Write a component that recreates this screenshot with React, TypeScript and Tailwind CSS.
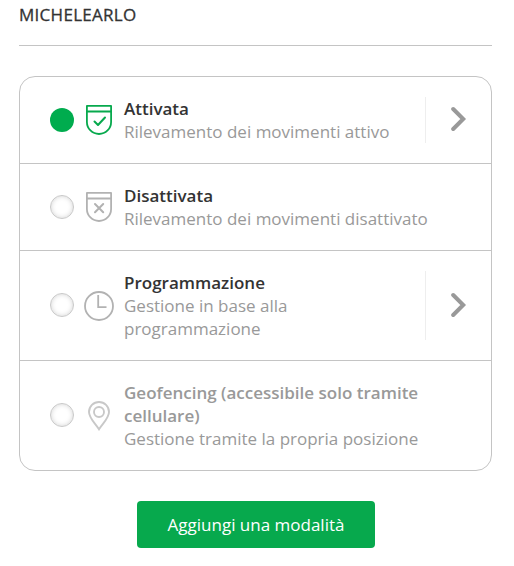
import React, { useState } from 'react';
import clsx from 'clsx';

interface IconProps {
  className?: string;
}

interface Mode {
  id: string;
  title: string;
  description: string;
  icon: React.FC<IconProps>;
  editable?: boolean;
  disabled?: boolean;
}

const ArmedIcon = ({ className }: IconProps) => (
  <svg className={className} xmlns="http://www.w3.org/2000/svg" width="30" height="30" fill="none" viewBox="0 0 30 30" stroke="currentColor" strokeWidth={1.8} strokeLinecap="round" strokeLinejoin="round">
    <path d="M2.9 .9h24.2v16a12.1 12.1 0 01-24.2 0zM3 6.5h24" />
    <path d="M10.5 16.5l3.5 3.5 7-7.5" strokeWidth={2} />
  </svg>
);

const DisarmedIcon = ({ className }: IconProps) => (
  <svg className={className} xmlns="http://www.w3.org/2000/svg" width="30" height="30" fill="none" viewBox="0 0 30 30" stroke="currentColor" strokeWidth={1.8} strokeLinecap="round" strokeLinejoin="round">
    <path d="M2.9 .9h24.2v16a12.1 12.1 0 01-24.2 0zM3 6.5h24" />
    <path d="M11 12l8.2 8.2M19.2 12L11 20.2" strokeWidth={2} />
  </svg>
);

const ScheduleIcon = ({ className }: IconProps) => (
  <svg className={className} xmlns="http://www.w3.org/2000/svg" width="30" height="30" fill="none" viewBox="0 0 30 30" stroke="currentColor" strokeWidth={1.8}>
    <circle cx="15" cy="15" r="14" />
    <path d="M14.2 4v12.2h8.3" />
  </svg>
);

const GeofencingIcon = ({ className }: IconProps) => (
  <svg className={className} xmlns="http://www.w3.org/2000/svg" width="30" height="30" fill="none" viewBox="0 0 30 30" stroke="currentColor" strokeWidth={1.9}>
    <path d="M15 28.3C11.5 22.5 5 17.2 5 11a10 10 0 0120 0c0 6.2-6.5 11.5-10 17.3z" />
    <circle cx="15" cy="11" r="5" />
  </svg>
);

const ChevronIcon = ({ className }: IconProps) => (
  <svg className={className} xmlns="http://www.w3.org/2000/svg" width="16" height="26" fill="none" viewBox="0 0 16 26" stroke="currentColor" strokeWidth={4} strokeLinecap="round">
    <path d="M2.2 3L12.2 13 2.2 23" />
  </svg>
);

const modes: Mode[] = [
  { id: 'armed', title: 'Attivata', description: 'Rilevamento dei movimenti attivo', icon: ArmedIcon, editable: true },
  { id: 'disarmed', title: 'Disattivata', description: 'Rilevamento dei movimenti disattivato', icon: DisarmedIcon },
  { id: 'schedule', title: 'Programmazione', description: 'Gestione in base alla programmazione', icon: ScheduleIcon, editable: true },
  { id: 'geofencing', title: 'Geofencing (accessibile solo tramite cellulare)', description: 'Gestione tramite la propria posizione', icon: GeofencingIcon, disabled: true },
];

const App: React.FC = () => {
  const [activeMode, setActiveMode] = useState('armed');

  return (
    <div className="min-h-screen bg-white px-[19px] pt-[3px] font-['Open_Sans',sans-serif] text-[17px] leading-[23px] text-[#333]">
      <h1 className="w-[473px] border-b border-[#c4c4c4] pb-[19px] tracking-[0.28px] [-webkit-text-stroke:0.3px_#333]">MICHELEARLO</h1>

      <ul className="mt-[30px] w-[473px] divide-y divide-[#c4c4c4] rounded-2xl border border-[#c4c4c4]">
        {modes.map(mode => {
          const active = mode.id === activeMode;
          return (
            <li key={mode.id} className="flex py-5 pl-[30px]">
              <button
                role="radio"
                aria-checked={active}
                aria-label={mode.title}
                disabled={mode.disabled}
                onClick={() => setActiveMode(mode.id)}
                className={clsx(
                  'size-6 shrink-0 self-center rounded-full',
                  (mode.id === 'schedule' || mode.id === 'geofencing') && 'mb-px',
                  active ? 'bg-[#00ac4e]' : 'border border-[#c8c8c8] bg-white shadow-[inset_0_0_5px_#d4d4d4]'
                )}
              />
              <mode.icon
                className={clsx(
                  'ml-2.5 shrink-0 self-center',
                  active ? 'text-[#07a94d]' : mode.disabled ? 'text-[#c8c8c8]' : 'text-[#b2b2b2]'
                )}
              />
              <div className={clsx('ml-2.5', mode.id === 'schedule' ? 'w-[230px]' : mode.editable ? 'w-[290px]' : 'w-[310px]')}>
                <h2 className={clsx('font-semibold', mode.disabled && 'text-[#999]')}>{mode.title}</h2>
                <p className="text-[#999]">{mode.description}</p>
              </div>
              {mode.editable && (
                <button className="ml-auto flex w-[66px] shrink-0 items-center border-l border-[#eee] pb-0.5 pl-[25px] text-[#999]" aria-label="Modifica">
                  <ChevronIcon />
                </button>
              )}
            </li>
          );
        })}
      </ul>

      <button className="ml-[118px] mt-[30px] block h-[47px] w-[238px] rounded bg-[#07a94d] text-white">
        Aggiungi una modalità
      </button>
    </div>
  );
};

export default App;
